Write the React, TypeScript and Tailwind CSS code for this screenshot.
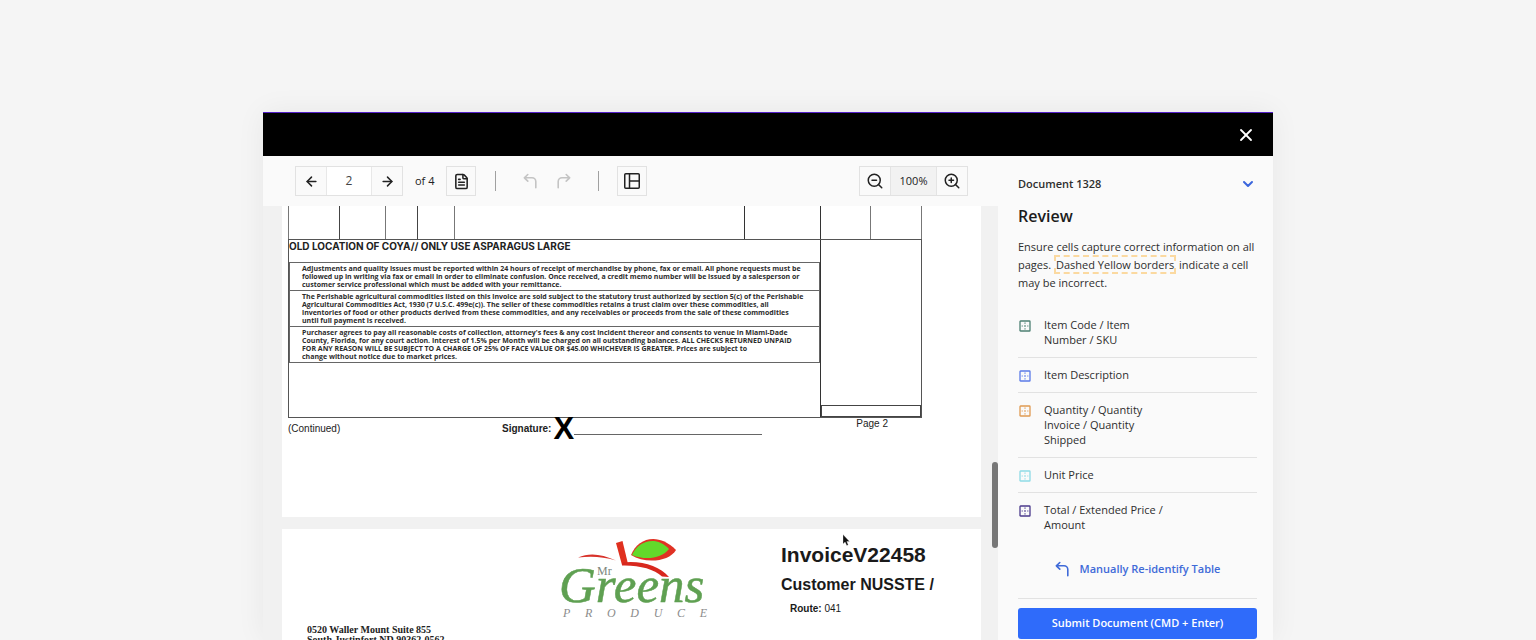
import type { ReactNode } from "react";
import { ArrowLeft, ArrowRight, ChevronDown, FileText, X, ZoomIn, ZoomOut } from "lucide-react";

const fields = [
  { label: "Item Code / Item Number / SKU", color: "text-[#4d8073]" },
  { label: "Item Description", color: "text-[#5b7be8]" },
  { label: "Quantity / Quantity Invoice / Quantity Shipped", color: "text-[#e09a52]" },
  { label: "Unit Price", color: "text-[#8fdbe6]" },
  { label: "Total / Extended Price / Amount", color: "text-[#4b3a8c]" },
];

const terms = [
  [
    "Adjustments and quality issues must be reported within 24 hours of receipt of merchandise by phone, fax or email. All phone requests must be",
    "followed up in writing via fax or email in order to eliminate confusion. Once received, a credit memo number will be issued by a salesperson or",
    "customer service professional which must be added with your remittance.",
  ],
  [
    "The Perishable agricultural commodities listed on this invoice are sold subject to the statutory trust authorized by section 5(c) of the Perishable",
    "Agricultural Commodities Act, 1930 (7 U.S.C. 499e(c)). The seller of these commodities retains a trust claim over these commodities, all",
    "inventories of food or other products derived from these commodities, and any receivables or proceeds from the sale of these commodities",
    "until full payment is received.",
  ],
  [
    "Purchaser agrees to pay all reasonable costs of collection, attorney's fees & any cost incident thereor and consents to venue in Miami-Dade",
    "County, Florida, for any court action. Interest of 1.5% per Month will be charged on all outstanding balances. ALL CHECKS RETURNED UNPAID",
    "FOR ANY REASON WILL BE SUBJECT TO A CHARGE OF 25% OF FACE VALUE OR $45.00 WHICHEVER IS GREATER. Prices are subject to",
    "change without notice due to market prices.",
  ],
];

function CellIcon({ className }: { className: string }) {
  return (
    <svg viewBox="0 0 12 12" className={`h-3 w-3 shrink-0 ${className}`} fill="none" stroke="currentColor" aria-hidden="true">
      <rect x="1" y="1" width="10" height="10" rx="0.6" strokeWidth="1.3" />
      <path d="M6 2.6v1.2M6 5.2v1.6M6 8.2v1.2M2.6 6h1.2M5.2 6h1.6M8.2 6h1.2" strokeWidth="1.1" />
    </svg>
  );
}

function LayoutIcon() {
  return (
    <svg viewBox="0 0 18 18" className="h-[18px] w-[18px]" fill="none" stroke="currentColor" strokeWidth="1.5" aria-hidden="true">
      <rect x="1.75" y="1.75" width="14.5" height="14.5" rx="1" />
      <path d="M6.5 1.75v14.5M6.5 9h9.75" />
    </svg>
  );
}

function TurnIcon({ className = "" }: { className?: string }) {
  return (
    <svg viewBox="0 0 14 16" className={`h-4 w-[14px] ${className}`} fill="none" stroke="currentColor" strokeWidth="1.6" strokeLinecap="round" strokeLinejoin="round" aria-hidden="true">
      <path d="M4.800 1.500L1.300 4.800L4.800 8.100M1.300 4.800H9A3.800 3.800 0 0 1 12.800 8.600V14.800" />
    </svg>
  );
}

function IconButton({ label, children, className = "" }: { label: string; children: ReactNode; className?: string }) {
  return (
    <button type="button" aria-label={label} className={`flex w-[30px] items-center justify-center ${className}`}>
      {children}
    </button>
  );
}

function Toolbar() {
  return (
    <div className="flex h-[50px] shrink-0 items-center bg-[#fafafa] pr-[30px] pl-8 text-[11px] text-[#222]">
      <div className="flex h-[30px] border border-[#e2e2e2]">
        <IconButton label="Previous page"><ArrowLeft size={15} strokeWidth={2.4} /></IconButton>
        <input aria-label="Page" defaultValue="2" className="w-[46px] border-x border-[#e8e8e8] bg-white text-center text-[12px] text-[#444]" />
        <IconButton label="Next page"><ArrowRight size={15} strokeWidth={2.4} /></IconButton>
      </div>
      <span className="ml-3 font-medium">of 4</span>
      <IconButton label="Document text" className="ml-3 h-[30px] border border-[#e2e2e2]"><FileText size={17} strokeWidth={2.2} /></IconButton>
      <span className="ml-[19px] h-5 w-px bg-[#a0a0a0]" />
      <div className="ml-[19px] flex h-[30px] text-[#c4c4c4]">
        <IconButton label="Undo"><TurnIcon /></IconButton>
        <IconButton label="Redo" className="ml-1"><TurnIcon className="-scale-x-100" /></IconButton>
      </div>
      <span className="ml-[19px] h-5 w-px bg-[#a0a0a0]" />
      <IconButton label="Table layout" className="ml-[18px] h-[30px] border border-[#e2e2e2]"><LayoutIcon /></IconButton>
      <div className="ml-auto flex h-[30px] border border-[#e2e2e2]">
        <IconButton label="Zoom out"><ZoomOut size={18} strokeWidth={2} /></IconButton>
        <span className="flex w-[47px] items-center justify-center border-x border-[#e4e4e4] bg-[#f2f2f2]">100%</span>
        <IconButton label="Zoom in"><ZoomIn size={18} strokeWidth={2} /></IconButton>
      </div>
    </div>
  );
}

function Logo() {
  return (
    <div className="w-[148px]">
      <svg viewBox="0 0 148 70" className="block w-full overflow-visible" role="img" aria-label="Mr Greens">
        <path d="M19 20.500C30 15.500 42 16.500 57 23.500C44 19.500 32 19 19 20.500Z" fill="#d8322a" />
        <path d="M57 6L63.500 4L69 27L63 28Z" fill="#e0301f" />
        <path d="M63 25.500C82 23 101 29 110 40L103 39.500C95 32 80 28 63 28.500Z" fill="#d8281e" />
        <path d="M72 18C79 1 99-5 117 13C110 25 86 27 72 18Z" fill="#e03224" />
        <path d="M73 18C79 4 97-2 110 12C103 21 87 24 73 18Z" fill="#62d92b" />
        <text x="38" y="38" fontSize="12" fill="#7d877d" className="font-['Liberation_Serif',serif]">Mr</text>
        <text x="0" y="65" fontSize="51" fill="#5fa052" stroke="#5fa052" strokeWidth="0.5" className="font-['Liberation_Serif',serif] italic">Greens</text>
      </svg>
      <div className="flex justify-between pl-1 font-['Liberation_Serif',serif] text-[12px] leading-3 text-[#8c8c8c] italic">
        {"PRODUCE".split("").map((letter) => <span key={letter}>{letter}</span>)}
      </div>
    </div>
  );
}

function InvoicePageTwo() {
  return (
    <article className="h-[311px] shrink-0 bg-white pr-[59px] pl-[6px]">
      <div className="flex h-[33px] border-l border-[#777]">
        <span className="w-[51px] border-r border-[#444]" />
        <span className="w-[46px] border-r border-[#777]" />
        <span className="w-8 border-r border-[#444]" />
        <span className="w-[37px] border-r border-[#777]" />
        <span className="flex-1 border-r border-[#333]" />
        <span className="w-[76px] border-r border-[#333]" />
        <span className="w-[50px] border-r border-[#777]" />
        <span className="w-[51px] border-r border-[#777]" />
      </div>
      <div className="flex h-[179px] border border-[#555]">
        <div className="min-w-0 flex-1 border-r border-[#333]">
          <h2 className="h-[22px] font-['Inter',sans-serif] text-[10px] leading-[13px] font-bold whitespace-nowrap text-[#222]">OLD LOCATION OF COYA// ONLY USE ASPARAGUS LARGE</h2>
          <div className="border-x border-t border-[#666]">
            {terms.map((lines) => (
              <p key={lines[0]} className="border-b border-[#666] pt-0.5 pb-px pl-3 font-['Open_Sans',sans-serif] text-[7px] leading-2 font-bold whitespace-nowrap text-[#2c2c2c]">
                {lines.map((line) => <span key={line} className="block">{line}</span>)}
              </p>
            ))}
          </div>
        </div>
        <div className="flex w-[100px] items-end">
          <span className="h-3 flex-1 border border-[#444]" />
        </div>
      </div>
      <div className="flex items-start text-[10px] text-[#222]">
        <span className="w-[214px] pt-[3px] leading-4">(Continued)</span>
        <span className="pt-[3px] leading-4 font-bold">Signature:</span>
        <span className="-mt-[5px] ml-0.5 text-[31px] leading-8 font-bold text-black">X</span>
        <span className="mt-4 w-[188px] border-b border-[#666]" />
        <span className="ml-auto pr-[34px] leading-3">Page 2</span>
      </div>
    </article>
  );
}

function InvoicePageThree() {
  return (
    <article className="relative h-[320px] shrink-0 bg-white pt-2 pl-[25px]">
      <div className="flex">
        <address className="w-[252px] pt-[88px] font-['Liberation_Serif',serif] text-[10px] leading-[10px] font-bold whitespace-nowrap text-[#222] not-italic">
          0520 Waller Mount Suite 855
          <br />
          South Justinfort ND 90362-0562
        </address>
        <Logo />
        <div className="ml-auto w-[200px] pt-[6px] text-[#1a1a1a]">
          <h2 className="text-[21px] leading-6 font-bold whitespace-nowrap">InvoiceV22458</h2>
          <p className="mt-2 text-[16px] leading-5 font-bold whitespace-nowrap">Customer NUSSTE /</p>
          <p className="mt-[6px] pl-[9px] text-[10px] leading-4"><b>Route:</b> 041</p>
        </div>
      </div>
      <svg viewBox="0 0 8 12" className="absolute top-[5px] right-[131px] h-3 w-2" aria-hidden="true">
        <path d="M1 0.500V10L3.100 8.100L4.700 11.600L6.300 10.900L4.800 7.500H7.600Z" fill="#111" stroke="#fff" strokeWidth="0.300" />
      </svg>
    </article>
  );
}

function Sidebar() {
  return (
    <aside className="w-[275px] shrink-0 bg-[#fafafa] pt-[19px] pr-4 pl-5 text-[11px] text-[#2e2e2e]">
      <button type="button" className="flex w-full items-center justify-between pr-px leading-[18px] font-semibold">
        Document 1328
        <ChevronDown size={16} strokeWidth={3} className="text-[#3b66dc]" />
      </button>
      <h1 className="mt-[11px] text-[16px] leading-6 font-semibold text-[#1c1c1c]">Review</h1>
      <p className="mt-[10px] leading-[18px]">
        Ensure cells capture correct information on all pages.{" "}
        <span className="border-2 border-dashed border-[#fbd9a0]">Dashed Yellow borders</span> indicate a cell may be incorrect.
      </p>
      <ul className="mt-4">
        {fields.map((field) => (
          <li key={field.label} className="flex border-b border-[#e2e2e2] pt-[9px] pb-[10px] leading-[15px] last:border-b-0">
            <CellIcon className={`mt-[3px] ml-px ${field.color}`} />
            <span className="ml-[13px] w-[124px]">{field.label}</span>
          </li>
        ))}
      </ul>
      <div className="flex justify-center border-b border-[#e2e2e2] pt-[18px] pb-5">
        <button type="button" className="flex items-center gap-[11px] leading-[18px] font-semibold text-[#3f6ad8]">
          <TurnIcon />
          Manually Re-identify Table
        </button>
      </div>
      <button type="button" className="mt-[9px] h-[31px] w-full rounded-[3px] bg-[#2f6bfa] font-semibold text-white">
        Submit Document (CMD + Enter)
      </button>
    </aside>
  );
}

export default function App() {
  return (
    <main className="flex h-screen flex-col overflow-hidden bg-[#f5f5f5] pt-28 font-['Open_Sans',sans-serif]">
      <section className="mx-auto flex min-h-0 w-full max-w-[1010px] flex-1 flex-col border-t border-[#5320c8] shadow-[0_0_28px_rgba(0,0,0,0.06)]">
        <header className="flex h-[43px] shrink-0 items-center justify-end bg-black pr-[17px]">
          <button type="button" aria-label="Close" className="text-white"><X size={20} strokeWidth={2.2} /></button>
        </header>
        <div className="flex min-h-0 flex-1">
          <div className="flex min-w-0 flex-1 flex-col">
            <Toolbar />
            <div className="flex min-h-0 flex-1 bg-[#f1f1f1] font-['Liberation_Sans',sans-serif]">
              <div className="flex min-w-0 flex-1 flex-col gap-3 overflow-hidden pl-[19px]">
                <InvoicePageTwo />
                <InvoicePageThree />
              </div>
              <div className="flex w-[17px] flex-col items-end pt-64">
                <span className="h-[86px] w-[6px] rounded-full bg-[#777]" />
              </div>
            </div>
          </div>
          <Sidebar />
        </div>
      </section>
    </main>
  );
}
